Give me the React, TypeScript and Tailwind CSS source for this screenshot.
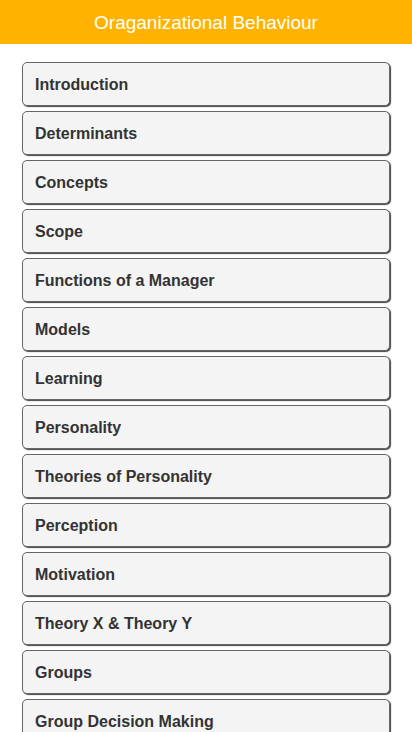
const topics = [
  'Introduction',
  'Determinants',
  'Concepts',
  'Scope',
  'Functions of a Manager',
  'Models',
  'Learning',
  'Personality',
  'Theories of Personality',
  'Perception',
  'Motivation',
  'Theory X & Theory Y',
  'Groups',
  'Group Decision Making',
];

export default function App() {
  return (
    <div className="min-h-screen bg-white font-['Liberation_Sans',Arial,sans-serif]">
      <div className="h-[44px] bg-[#ffb300] flex items-center justify-center">
        <h1 className="text-white text-[19px] leading-none">Oraganizational Behaviour</h1>
      </div>
      <div className="flex flex-col gap-[5px] px-[22px] pt-[18px]">
        {topics.map((t) => (
          <button
            key={t}
            className="h-[44px] w-full text-left pl-[12px] pt-[2px] bg-[#f4f4f4] border border-[#666] rounded-[5px] shadow-[1px_1px_1px_#444] text-[16px] font-bold text-[#333]"
          >
            {t}
          </button>
        ))}
      </div>
    </div>
  );
}
